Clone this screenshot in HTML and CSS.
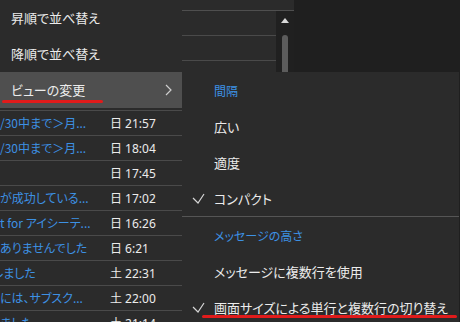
FILE: index.html
```html
<!DOCTYPE html>
<html lang="ja">
<head>
    <meta charset="UTF-8">
    <meta name="viewport" content="width=device-width, initial-scale=1.0">
    <title>ビューの変更</title>
    <link rel="stylesheet" href="styles.css">
</head>
<body>
    <div class="screen">
        <div class="list-pane">
            <div class="list-head"></div>
            <div class="list-body">
                <div class="rows">
                    <div class="row"><span class="subj"></span><span class="date"></span></div>
                    <div class="row"><span class="subj"></span><span class="date"></span></div>
                    <div class="row"><span class="subj"></span><span class="date"></span></div>
                    <div class="row"><span class="subj"></span><span class="date"></span></div>
                    <div class="row"><span class="subj">/30中まで＞月...</span><span class="date">日 21:57</span></div>
                    <div class="row"><span class="subj">/30中まで＞月...</span><span class="date">日 18:04</span></div>
                    <div class="row"><span class="subj"></span><span class="date">日 17:45</span></div>
                    <div class="row"><span class="subj">が成功している...</span><span class="date">日 17:02</span></div>
                    <div class="row"><span class="subj">t for アイシーテ...</span><span class="date">日 16:26</span></div>
                    <div class="row"><span class="subj">ありませんでした</span><span class="date">日 6:21</span></div>
                    <div class="row"><span class="subj cut">ルました</span><span class="date">土 22:31</span></div>
                    <div class="row"><span class="subj">には、サブスク...</span><span class="date">土 22:00</span></div>
                    <div class="row"><span class="subj">ました</span><span class="date">土 21:14</span></div>
                </div>
                <div class="scrollbar">
                    <svg class="scroll-up" width="8" height="5" viewBox="0 0 8 5"><polygon points="0,5 4,0 8,5" fill="#d8d8d8"/></svg>
                    <div class="thumb"></div>
                </div>
            </div>
        </div>
        <div class="reading-pane"></div>

        <!-- context menu -->
        <div class="menu main-menu">
            <div class="item">昇順で並べ替え</div>
            <div class="item">降順で並べ替え</div>
            <div class="item active">ビューの変更
                <svg class="chevron" width="7" height="12" viewBox="0 0 7 12"><polyline points="1,1 6,6 1,11" fill="none" stroke="#cfcfcf" stroke-width="1.2"/></svg>
            </div>
        </div>

        <div class="menu sub-menu">
            <div class="item heading">間隔</div>
            <div class="item">広い</div>
            <div class="item">適度</div>
            <div class="item"><svg class="check" width="13" height="11" viewBox="0 0 13 11"><polyline points="1,5 6,10 12,1" fill="none" stroke="#d6d6d6" stroke-width="1.2"/></svg>コンパクト</div>
            <div class="divider"></div>
            <div class="item heading">メッセージの高さ</div>
            <div class="item">メッセージに複数行を使用</div>
            <div class="item"><svg class="check" width="13" height="11" viewBox="0 0 13 11"><polyline points="1,5 6,10 12,1" fill="none" stroke="#d6d6d6" stroke-width="1.2"/></svg>画面サイズによる単行と複数行の切り替え</div>
        </div>

        <div class="mark mark-view"></div>
        <div class="mark mark-toggle"></div>
    </div>
</body>
</html>
```

FILE: styles.css
```css
body {
    margin: 0;
    background-color: #1f1f1f;
    color: #ececec;
    font-family: "Noto Sans CJK JP", sans-serif;
    font-feature-settings: "palt";
}

.screen {
    position: relative;
    width: 460px;
    height: 322px;
    overflow: hidden;
    display: flex;
}

/* message list behind the menus */
.list-pane {
    width: 294px;
    display: flex;
    flex-direction: column;
    background-color: #2b2b2b;
}

.list-head {
    height: 10px;
    flex-shrink: 0;
    border-bottom: 1px solid #4f4f4f;
}

.list-body {
    display: flex;
    flex: 1;
    min-height: 0;
}

.rows {
    flex: 1;
}

.row {
    height: 25px;
    box-sizing: border-box;
    border-bottom: 1px solid #4a4a4a;
    display: flex;
    align-items: center;
    overflow: hidden;
    white-space: nowrap;
}

.subj {
    width: 110px;
    flex-shrink: 0;
    color: #3d91e4;
    font-size: 12px;
    padding-bottom: 1px;
}

.subj.cut {
    margin-left: -8px;
    width: 118px;
}

.date {
    font-family: "Noto Sans", "Noto Sans CJK JP", sans-serif;
    font-size: 12px;
    color: #ececec;
}

.scrollbar {
    width: 18px;
    background-color: #202020;
    display: flex;
    flex-direction: column;
    align-items: center;
}

.scroll-up {
    margin-top: 7px;
}

.thumb {
    width: 6px;
    height: 200px;
    margin-top: 12px;
    border-radius: 3px 3px 0 0;
    background-color: #5c5c5c;
}

.reading-pane {
    flex: 1;
    background-color: #1f1f1f;
}

/* menus */
.menu {
    position: absolute;
    background-color: #2b2b2b;
    font-size: 13px;
}

.menu .item {
    height: 36px;
    display: flex;
    align-items: center;
    white-space: nowrap;
    position: relative;
}

.main-menu {
    left: 0;
    top: 0;
    width: 182px;
}

.main-menu .item {
    padding: 0 0 2px 11px;
    box-sizing: border-box;
}

.main-menu .item.active {
    background-color: #4f4f4f;
}

.chevron {
    position: absolute;
    right: 10px;
    top: 12px;
}

.sub-menu {
    left: 182px;
    top: 72px;
    width: 277px;
    height: 260px;
}

.sub-menu .item {
    padding-left: 32px;
}

.sub-menu .heading {
    color: #3d91e4;
    font-size: 12px;
}

.check {
    position: absolute;
    left: 10px;
    top: 13px;
}

.divider {
    height: 1px;
    background-color: #555555;
}

/* red annotation underlines */
.mark {
    position: absolute;
    height: 3px;
    border-radius: 2px;
    background-color: #e01b1b;
}

.mark-view {
    left: 2px;
    top: 100px;
    width: 101px;
}

.mark-toggle {
    left: 202px;
    top: 315px;
    width: 255px;
}
```
